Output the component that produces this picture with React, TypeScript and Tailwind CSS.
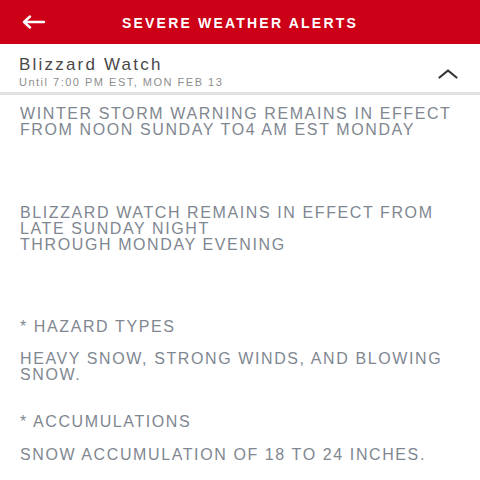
import React from "react"

const body = "text-[16px] leading-[16px] text-[#7f8791] tracking-[1.6px] whitespace-nowrap"

export default function App() {
  return (
    <div className="w-[480px] h-[480px] bg-white overflow-hidden" style={{ fontFamily: '"Liberation Sans", Arial, sans-serif' }}>
      <div className="h-[44px] bg-[#cc0017] flex items-center">
        <div className="w-[68px] pl-[22px] flex items-center">
          <svg width="24" height="14" viewBox="0 0 24 14" fill="none" stroke="white" strokeWidth="2.4" strokeLinecap="round" strokeLinejoin="round">
            <path d="M22 7H3" />
            <path d="M8 1.5L2 7l6 5.5" />
          </svg>
        </div>
        <div className="flex-1 text-center pr-[68px] text-white font-bold text-[14px] tracking-[2.2px] mt-[2px]">SEVERE WEATHER ALERTS</div>
      </div>
      <div className="h-[48px] flex items-start pl-[19px] pr-[22px] pt-[11px]">
        <div className="flex-1 flex flex-col">
          <div className="text-[17px] leading-[20px] text-[#484848] tracking-[2.2px]">Blizzard Watch</div>
          <div className="text-[11px] leading-[12px] text-[#8d8d8d] tracking-[1.5px] mt-[1px]">Until 7:00 PM EST, MON FEB 13</div>
        </div>
        <svg width="20" height="10" viewBox="0 0 20 10" fill="none" stroke="#333" strokeWidth="2.2" strokeLinecap="round" strokeLinejoin="round" className="mt-[14px]">
          <path d="M1.5 8.5L10 1.5l8.5 7" />
        </svg>
      </div>
      <div className="h-[3px] bg-[#e3e3e3]" />
      <div className="pl-[20px] pr-[20px] pt-[11px]">
        <div className={body}>
          WINTER STORM WARNING REMAINS IN EFFECT<br />FROM NOON SUNDAY TO4 AM EST MONDAY
        </div>
        <div className={`${body} mt-[67px]`}>
          BLIZZARD WATCH REMAINS IN EFFECT FROM<br />LATE SUNDAY NIGHT<br />THROUGH MONDAY EVENING
        </div>
        <div className={`${body} mt-[66px]`}>* HAZARD TYPES</div>
        <div className={`${body} mt-[16px]`}>
          HEAVY SNOW, STRONG WINDS, AND BLOWING<br />SNOW.
        </div>
        <div className={`${body} mt-[31px]`}>* ACCUMULATIONS</div>
        <div className={`${body} mt-[17px]`}>SNOW ACCUMULATION OF 18 TO 24 INCHES.</div>
      </div>
    </div>
  )
}
